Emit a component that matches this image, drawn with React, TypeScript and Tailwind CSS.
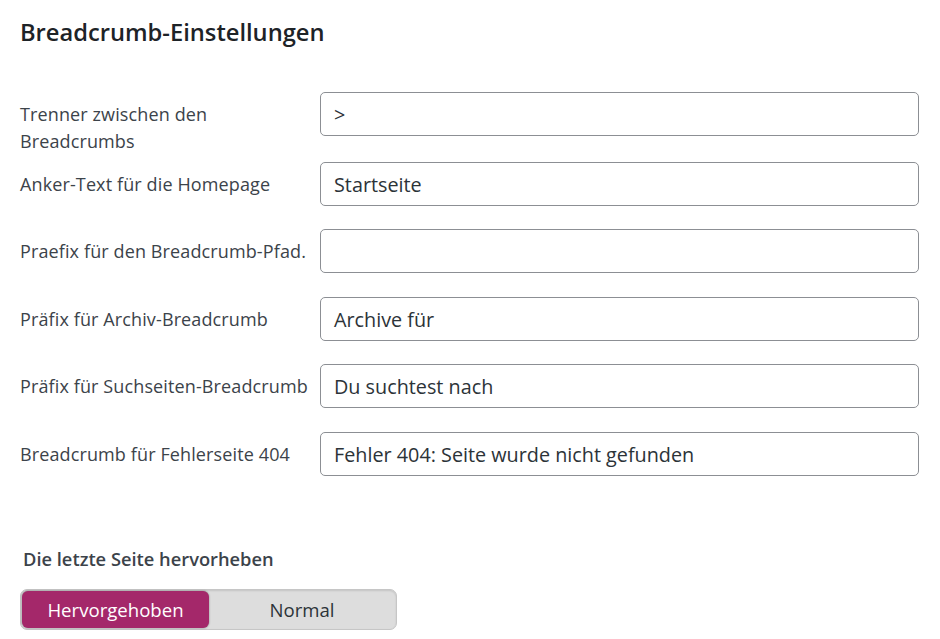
import React from "react";

const rows: { label: string; value: string; mt: string }[] = [
  { label: "Trenner zwischen den Breadcrumbs", value: ">", mt: "mt-0" },
  { label: "Anker-Text für die Homepage", value: "Startseite", mt: "mt-[7px]" },
  { label: "Praefix für den Breadcrumb-Pfad.", value: "", mt: "mt-[23px]" },
  { label: "Präfix für Archiv-Breadcrumb", value: "Archive für", mt: "mt-[24px]" },
  { label: "Präfix für Suchseiten-Breadcrumb", value: "Du suchtest nach", mt: "mt-[23px]" },
  { label: "Breadcrumb für Fehlerseite 404", value: "Fehler 404: Seite wurde nicht gefunden", mt: "mt-[24px]" },
];

export default function App() {
  return (
    <div
      className="w-[940px] h-[639px] bg-white overflow-hidden pl-[20px] pr-[21px]"
      style={{ fontFamily: '"Open Sans", "Noto Sans", sans-serif' }}
    >
      <h1 className="pt-[15px] text-[23.7px] leading-[34px] font-semibold text-[#1d2327]">
        Breadcrumb-Einstellungen
      </h1>
      <div className="mt-[43px] flex flex-col">
        {rows.map((r, i) => (
          <div key={i} className={`flex items-start ${r.mt}`}>
            <div className="w-[300px] shrink-0 pt-[9px] pr-[8px] text-[18px] leading-[27px] text-[#3c434a] tracking-[0.12px]">
              {r.label}
            </div>
            <div className="flex-1 h-[44px] rounded-[5px] border border-[#8c8f94] bg-white flex items-center px-[13px] pt-[1px] text-[19.8px] text-[#2c3338]">
              {r.value}
            </div>
          </div>
        ))}
      </div>
      <div className="mt-[69px] pl-[3px] text-[18.3px] font-semibold leading-[27px] text-[#3c434a]">
        Die letzte Seite hervorheben
      </div>
      <div className="mt-[17px] w-[377px] h-[41px] rounded-[7px] border border-[#c6c6c6] bg-[#dddddd] p-[1px] flex shadow-[inset_0_1px_2px_rgba(0,0,0,0.12)]">
        <div className="w-[187px] h-full rounded-[6px] bg-[#a4286a] text-white flex items-center justify-center text-[18.6px] shadow-[0_0_2px_rgba(0,0,0,0.45)]">
          Hervorgehoben
        </div>
        <div className="flex-1 h-full flex items-center justify-center text-[18.6px] text-[#2c3338]">
          Normal
        </div>
      </div>
    </div>
  );
}
